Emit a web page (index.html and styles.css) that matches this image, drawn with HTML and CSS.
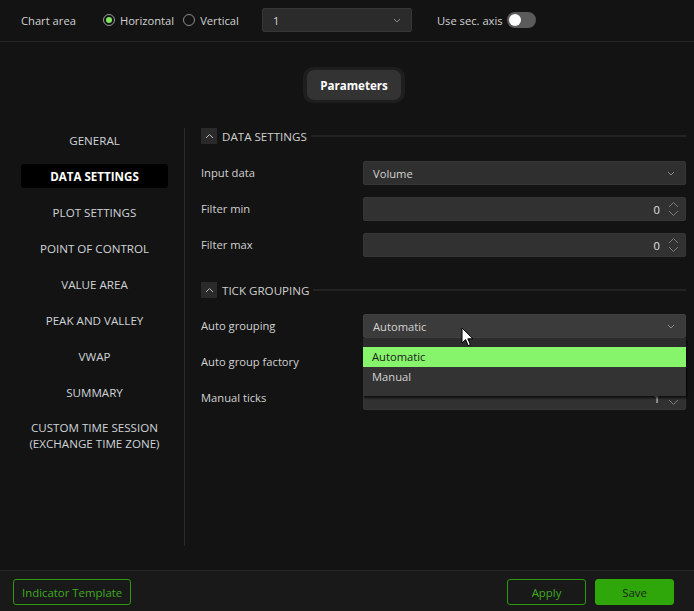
FILE: index.html
```html
<!DOCTYPE html>
<html>
<head>
<meta charset="utf-8">
<link rel="stylesheet" href="styles.css">
</head>
<body>
<div class="app">
  <header class="topbar">
    <span class="top-label">Chart area</span>
    <span class="radio on"><span class="circle"><span class="dot"></span></span>Horizontal</span>
    <span class="radio"><span class="circle"></span>Vertical</span>
    <div class="select top-select"><span>1</span><svg class="chev" width="8" height="5" viewBox="0 0 8 5"><path d="M1 1l3 3 3-3" fill="none" stroke="#8a8a8a" stroke-width="1"/></svg></div>
    <span class="top-label sec">Use sec. axis</span>
    <span class="toggle"><span class="knob"></span></span>
  </header>

  <div class="tabs">
    <div class="tab-ring"><div class="tab">Parameters</div></div>
  </div>

  <div class="body">
    <nav class="side">
      <div class="nav-item">GENERAL</div>
      <div class="nav-item active">DATA SETTINGS</div>
      <div class="nav-item">PLOT SETTINGS</div>
      <div class="nav-item">POINT OF CONTROL</div>
      <div class="nav-item">VALUE AREA</div>
      <div class="nav-item">PEAK AND VALLEY</div>
      <div class="nav-item">VWAP</div>
      <div class="nav-item">SUMMARY</div>
      <div class="nav-item two">CUSTOM TIME SESSION<br>(EXCHANGE TIME ZONE)</div>
    </nav>

    <main class="content">
      <div class="section-head">
        <span class="caret"><svg width="9" height="6" viewBox="0 0 9 6"><path d="M1 5l3.5-3.5L8 5" fill="none" stroke="#bdbdbd" stroke-width="1"/></svg></span>
        <span class="section-title">DATA SETTINGS</span>
        <span class="rule"></span>
      </div>
      <div class="row">
        <span class="row-label">Input data</span>
        <div class="select field"><span>Volume</span><svg class="chev" width="8" height="5" viewBox="0 0 8 5"><path d="M1 1l3 3 3-3" fill="none" stroke="#8a8a8a" stroke-width="1"/></svg></div>
      </div>
      <div class="row">
        <span class="row-label">Filter min</span>
        <div class="number field"><span class="num">0</span><svg class="spin" width="11" height="16" viewBox="0 0 11 16"><path d="M1 6l4.5-4.5L10 6M1 10l4.5 4.5L10 10" fill="none" stroke="#7a7a7a" stroke-width="1"/></svg></div>
      </div>
      <div class="row">
        <span class="row-label">Filter max</span>
        <div class="number field"><span class="num">0</span><svg class="spin" width="11" height="16" viewBox="0 0 11 16"><path d="M1 6l4.5-4.5L10 6M1 10l4.5 4.5L10 10" fill="none" stroke="#7a7a7a" stroke-width="1"/></svg></div>
      </div>

      <div class="section-head second">
        <span class="caret"><svg width="9" height="6" viewBox="0 0 9 6"><path d="M1 5l3.5-3.5L8 5" fill="none" stroke="#bdbdbd" stroke-width="1"/></svg></span>
        <span class="section-title">TICK GROUPING</span>
        <span class="rule"></span>
      </div>
      <div class="row">
        <span class="row-label">Auto grouping</span>
        <div class="select field hover"><span>Automatic</span><svg class="chev" width="8" height="5" viewBox="0 0 8 5"><path d="M1 1l3 3 3-3" fill="none" stroke="#8a8a8a" stroke-width="1"/></svg>
          <div class="menu">
            <div class="opt sel">Automatic</div>
            <div class="opt">Manual</div>
          </div>
          <svg class="cursor" width="13" height="20" viewBox="0 0 13 20"><path d="M1 1v15l3.6-3.4 2.6 6 2.2-1-2.6-5.8H12z" fill="#fff" stroke="#000" stroke-width="1"/></svg>
        </div>
      </div>
      <div class="row">
        <span class="row-label">Auto group factory</span>
      </div>
      <div class="row">
        <span class="row-label">Manual ticks</span>
        <div class="number field"><span class="num">1</span><svg class="spin" width="11" height="16" viewBox="0 0 11 16"><path d="M1 6l4.5-4.5L10 6M1 10l4.5 4.5L10 10" fill="none" stroke="#7a7a7a" stroke-width="1"/></svg></div>
      </div>
    </main>
  </div>

  <footer class="footer">
    <button class="btn outline">Indicator Template</button>
    <span class="spacer"></span>
    <button class="btn outline wide">Apply</button>
    <button class="btn solid wide">Save</button>
  </footer>
</div>
</body>
</html>
```

FILE: styles.css
```css
* { box-sizing: border-box; }
html, body { margin: 0; padding: 0; background: #131313; }
body {
  font-family: "Open Sans", "Noto Sans", sans-serif;
  font-size: 11.2px;
  color: #d2d2d2;
}
.app {
  width: 694px;
  height: 611px;
  display: flex;
  flex-direction: column;
  background: #131313;
}

/* top bar */
.topbar {
  height: 42px;
  flex: none;
  border-bottom: 1px solid #242424;
  display: flex;
  align-items: center;
  padding-left: 21px;
  padding-bottom: 1px;
}
.top-label { margin-right: 27px; }
.top-label.sec { margin-right: 4px; }
.radio {
  display: inline-flex;
  align-items: center;
  margin-right: 9px;
}
.circle {
  width: 12px;
  height: 12px;
  border-radius: 50%;
  border: 1px solid #8c8c8c;
  margin-right: 5px;
  display: flex;
  align-items: center;
  justify-content: center;
}
.radio.on .circle { border-color: #9a9a9a; }
.dot {
  width: 6px;
  height: 6px;
  border-radius: 50%;
  background: #80e85c;
}
.radio + .radio { margin-right: 23px; }

.select {
  display: flex;
  align-items: center;
  justify-content: space-between;
  background: #2f2f2f;
  border: 1px solid #363636;
  border-radius: 2px;
  padding: 0 10px 0 9px;
  position: relative;
}
.top-select {
  width: 150px;
  height: 24px;
  margin-right: 25px;
  background: #2b2b2b;
  padding-left: 10px;
}
.chev { flex: none; }

.toggle {
  width: 29px;
  height: 16px;
  border-radius: 8px;
  background: #5b5b5b;
  display: flex;
  align-items: center;
  padding-left: 2px;
}
.knob {
  width: 12px;
  height: 12px;
  border-radius: 50%;
  background: #ffffff;
}

/* tabs */
.tabs {
  flex: none;
  display: flex;
  justify-content: center;
  padding-top: 25px;
  padding-left: 14px;
}
.tab-ring {
  background: #1e1e1e;
  border-radius: 10px;
  padding: 3px 4px;
}
.tab {
  width: 94px;
  height: 30px;
  border-radius: 7px;
  background: #333333;
  color: #ffffff;
  font-weight: 700;
  font-size: 11.6px;
  display: flex;
  align-items: center;
  justify-content: center;
}

/* body */
.body {
  flex: none;
  height: 418px;
  margin-top: 25px;
  display: flex;
}
.side {
  width: 185px;
  flex: none;
  border-right: 1px solid #2a2a2a;
  padding-left: 21px;
  display: flex;
  flex-direction: column;
  gap: 12px;
}
.nav-item {
  width: 147px;
  height: 24px;
  display: flex;
  align-items: center;
  justify-content: center;
  text-align: center;
  color: #cfd3d8;
  font-size: 11.6px;
  border-radius: 3px;
}
.nav-item.active {
  background: #000000;
  color: #ffffff;
  font-weight: 700;
}
.nav-item.two {
  height: 40px;
  line-height: 16px;
}

.content {
  flex: 1;
  padding: 0 8px 0 16px;
}
.section-head {
  display: flex;
  align-items: center;
  height: 16px;
  margin-bottom: 17px;
}
.section-head.second { margin-top: 25px; margin-bottom: 16px; }
.caret {
  width: 16px;
  height: 16px;
  background: #2a2a2a;
  display: flex;
  align-items: center;
  justify-content: center;
  margin-right: 5px;
}
.section-title { color: #d0d0d0; margin-right: 4px; font-size: 11.6px; }
.rule {
  flex: 1;
  height: 2px;
  background: #232323;
}
.row {
  display: flex;
  align-items: center;
  height: 24px;
  margin-bottom: 12px;
}
.row-label {
  width: 162px;
  flex: none;
  color: #d2d2d2;
  padding-bottom: 2px;
}
.field {
  flex: 1;
  height: 24px;
}
.field.hover { background: #3b3b3b; border-color: #404040; }
.number {
  display: flex;
  align-items: center;
  justify-content: flex-end;
  background: #313131;
  border: 1px solid #363636;
  border-radius: 2px;
  padding-right: 6px;
}
.num { margin-right: 8px; color: #e0e0e0; }

.menu {
  position: absolute;
  left: -1px;
  right: -1px;
  top: 23px;
  height: 58px;
  background: #333333;
  border-top: 9px solid #2c2c2c;
  box-shadow: 1px 2px 2px rgba(0,0,0,0.7);
  z-index: 5;
}
.opt {
  height: 20px;
  line-height: 20px;
  padding-left: 9px;
  color: #d2d2d2;
}
.opt.sel {
  background: #86f56c;
  color: #1b1b1b;
}
.cursor {
  position: absolute;
  left: 97px;
  top: 12px;
  z-index: 6;
}

/* footer */
.footer {
  margin-top: auto;
  height: 41px;
  flex: none;
  background: #191919;
  border-top: 1px solid #262626;
  display: flex;
  align-items: center;
  padding: 2px 20px 0 13px;
  gap: 9px;
}
.spacer { flex: 1; }
.btn {
  font-family: "Open Sans", "Noto Sans", sans-serif;
  font-size: 11.4px;
  height: 26px;
  border-radius: 3px;
  padding: 0 8px;
  cursor: default;
}
.btn.outline {
  background: transparent;
  border: 1px solid #2c9a0e;
  color: #3eab1f;
}
.btn.wide { width: 79px; }
.btn.solid {
  background: #2fa60a;
  border: 1px solid #2fa60a;
  color: #1c1c1c;
}
```
